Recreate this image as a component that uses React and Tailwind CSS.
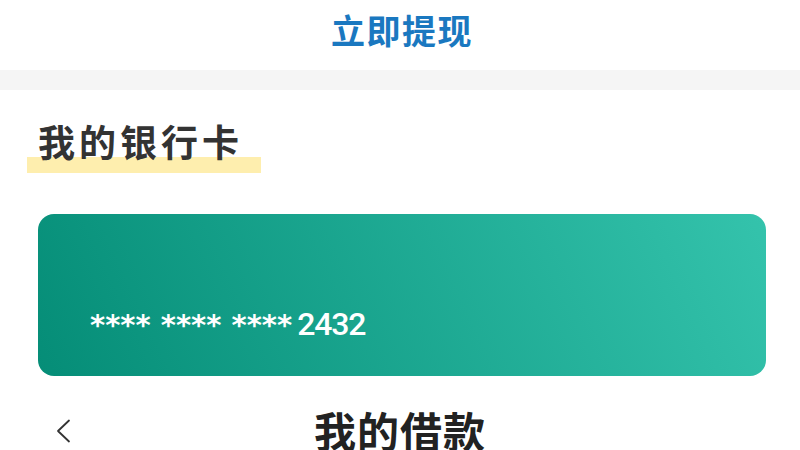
const cjk = { fontFamily: '"Noto Sans CJK SC", "Noto Sans", sans-serif' }

export default function App() {
  return (
    <div className="w-[800px] h-[450px] overflow-hidden bg-white" style={cjk}>
      {/* header */}
      <div className="h-[70px] flex items-start justify-center pt-[13px]">
        <span className="text-[34px] leading-none font-bold text-[#1a78c0] tracking-[1.5px] ml-[4px]">立即提现</span>
      </div>
      <div className="h-[20px] bg-[#f5f5f5]" />

      <div className="pl-[38px] pr-[34px] pt-[33px]">
        {/* section title */}
        <div className="relative inline-block">
          <div className="absolute left-[-11px] top-[34px] w-[234px] h-[16px] bg-[#feeeae]" />
          <span className="relative text-[37px] leading-none font-bold text-[#333] tracking-[4px]">我的银行卡</span>
        </div>

        {/* bank card */}
        <div className="mt-[52px] h-[162px] rounded-[16px] bg-[linear-gradient(65deg,#058d77,#34c3ac)] flex items-end pl-[52px] pb-[36px]">
          <div className="flex items-baseline text-white leading-none">
            <span className="text-[29px] font-bold" style={{ fontFamily: '"DejaVu Sans", sans-serif' }}>**** **** ****</span>
            <span className="text-[32px] font-medium tracking-[-1.2px] ml-[5px]" style={{ fontFamily: 'Roboto, "Liberation Sans", sans-serif' }}>2432</span>
          </div>
        </div>
      </div>

      {/* bottom nav */}
      <div className="relative h-[80px] flex items-center justify-center pt-[28px]">
        <svg width="16" height="24" viewBox="0 0 16 24" className="absolute left-[56px] top-[43px]" fill="none" stroke="#333" strokeWidth="1.8" strokeLinecap="round" strokeLinejoin="round">
          <polyline points="13,1.5 2,12 13,22.5" />
        </svg>
        <span className="text-[42px] leading-none font-bold text-[#222] tracking-[1px]">我的借款</span>
      </div>
    </div>
  )
}
